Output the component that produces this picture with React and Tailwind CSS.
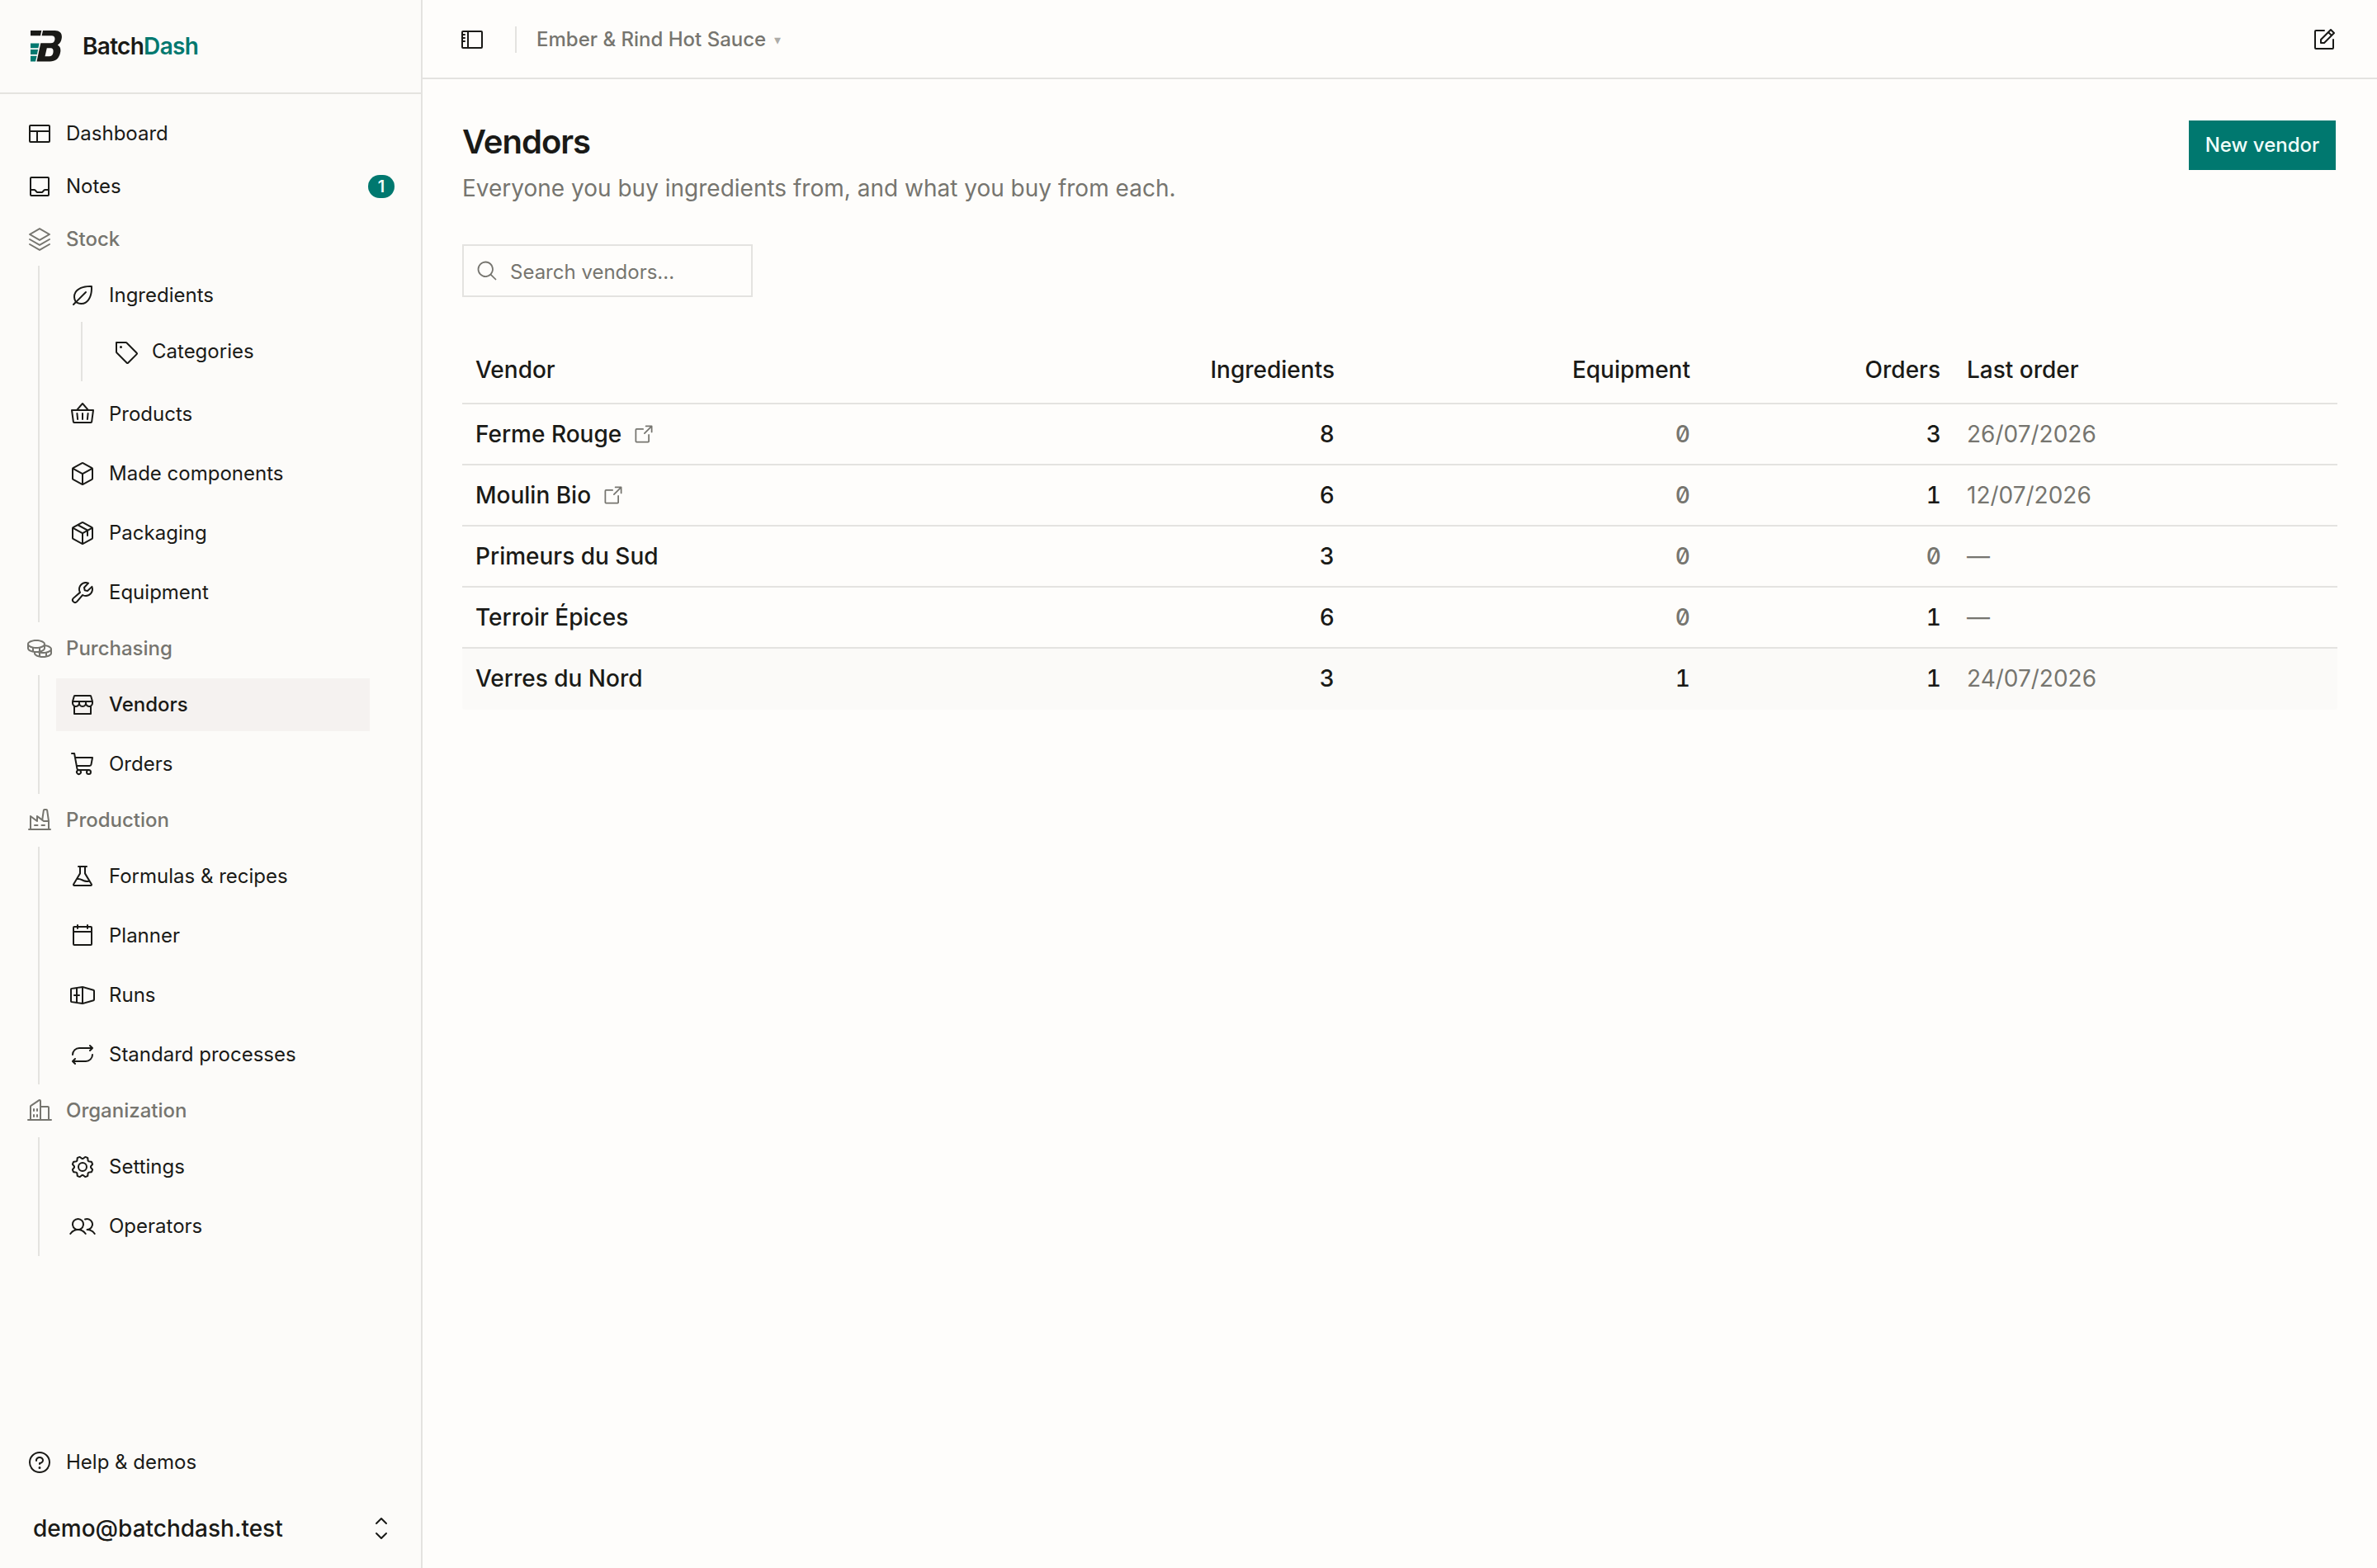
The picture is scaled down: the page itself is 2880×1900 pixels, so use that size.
import {
    PiLayout, PiTray, PiStack, PiLeaf, PiTag, PiBasket, PiCube, PiPackage, PiWrench, PiCoins,
    PiStorefront, PiShoppingCart, PiFactory, PiFlask, PiCalendarBlank, PiShippingContainer,
    PiRepeat, PiBuildings, PiGear, PiUsers, PiQuestion, PiCaretUpDown, PiSidebar,
    PiNotePencil, PiMagnifyingGlass, PiArrowSquareOut,
} from 'react-icons/pi';
import clsx from 'clsx';

const groups = [
    {
        label: 'Stock',
        icon: PiStack,
        items: [
            { label: 'Ingredients', icon: PiLeaf, children: [{ label: 'Categories', icon: PiTag }] },
            { label: 'Products', icon: PiBasket },
            { label: 'Made components', icon: PiCube },
            { label: 'Packaging', icon: PiPackage },
            { label: 'Equipment', icon: PiWrench },
        ],
    },
    {
        label: 'Purchasing',
        icon: PiCoins,
        items: [
            { label: 'Vendors', icon: PiStorefront, active: true },
            { label: 'Orders', icon: PiShoppingCart },
        ],
    },
    {
        label: 'Production',
        icon: PiFactory,
        items: [
            { label: 'Formulas & recipes', icon: PiFlask },
            { label: 'Planner', icon: PiCalendarBlank },
            { label: 'Runs', icon: PiShippingContainer },
            { label: 'Standard processes', icon: PiRepeat },
        ],
    },
    {
        label: 'Organization',
        icon: PiBuildings,
        items: [
            { label: 'Settings', icon: PiGear },
            { label: 'Operators', icon: PiUsers },
        ],
    },
];

const vendors = [
    { name: 'Ferme Rouge', link: true, ingredients: 8, equipment: 0, orders: 3, last: '26/07/2026' },
    { name: 'Moulin Bio', link: true, ingredients: 6, equipment: 0, orders: 1, last: '12/07/2026' },
    { name: 'Primeurs du Sud', ingredients: 3, equipment: 0, orders: 0, last: '—' },
    { name: 'Terroir Épices', ingredients: 6, equipment: 0, orders: 1, last: '—' },
    { name: 'Verres du Nord', ingredients: 3, equipment: 1, orders: 1, last: '24/07/2026', hover: true },
];

const columns = 'grid grid-cols-[771px_301px_431px_304px_465px] items-center';

function Logo() {
    return (
        <svg viewBox="0 0 38 38" className="size-[38px] shrink-0">
            <path fill="#1a1a17" d="M0 0H13.300L12 6.200H0Z" />
            <path
                fill="#1a1a17"
                fillRule="evenodd"
                d="M15 0H29.500C35.500 0 38.500 3.500 37.800 9C37.200 13.500 35.500 15.800 32.800 17.500C36 19.200 37 22.500 36 27C34.500 34 30 37.500 23.500 37.500H7.500L12.300 15.300H24.500C27.500 15.300 29 13.800 29.400 11C29.800 8 28.500 6.200 25.500 6.200H13.600Z M19.800 21.300L17.500 31.300H22.500C25.300 31.300 26.800 30 27.400 27C28 23 27 21.300 24.500 21.300Z"
            />
            <path fill="#00786f" d="M0 15.500H10.600L9.400 21.200H0Z M0 23H9.100L7.900 29H0Z M0 30.700H7.600L6 37.500H0Z" />
        </svg>
    );
}

function NavItem({ item, muted }) {
    const Icon = item.icon;
    return (
        <a
            className={clsx(
                'flex h-16 items-center gap-4 px-4 text-[24px]',
                muted && 'font-medium text-[#76756f]',
                item.active && 'bg-[#f5f2f0] font-medium'
            )}
        >
            <Icon className="size-8 shrink-0" />
            <span>{item.label}</span>
            {item.badge && (
                <span className="ml-auto flex h-7 w-8 items-center justify-center rounded-full bg-teal-700 text-[20px] font-semibold text-teal-50">
                    {item.badge}
                </span>
            )}
        </a>
    );
}

function SubMenu({ items }) {
    return (
        <ul className="mr-[26px] ml-[30px] flex flex-col gap-2 border-l-2 border-[#e4e3e0] px-5 py-1">
            {items.map((item) => (
                <li key={item.label}>
                    <NavItem item={item} />
                    {item.children && <SubMenu items={item.children} />}
                </li>
            ))}
        </ul>
    );
}

function Count({ value }) {
    return (
        <span
            className={clsx(
                'pr-[15px] text-right font-medium tabular-nums slashed-zero',
                value === 0 && 'text-[#76756f]'
            )}
        >
            {value}
        </span>
    );
}

export default function App() {
    return (
        <div className="flex h-[1900px] w-[2880px] overflow-hidden bg-[#fefdfb] font-['Inter',sans-serif] text-[#1a1a17]">
            {/* Sidebar */}
            <aside className="flex w-[512px] shrink-0 flex-col border-r-2 border-[#e4e3e0] bg-[#fcfbf9]">
                <div className="flex h-[114px] items-center gap-[25px] border-b-2 border-[#e4e3e0] px-[37px]">
                    <Logo />
                    <span className="text-[28px] font-semibold tracking-tight">
                        Batch<span className="text-teal-700">Dash</span>
                    </span>
                </div>
                <nav className="flex-1 p-4">
                    <NavItem item={{ label: 'Dashboard', icon: PiLayout }} />
                    <NavItem item={{ label: 'Notes', icon: PiTray, badge: 1 }} />
                    {groups.map((group) => (
                        <div key={group.label}>
                            <NavItem item={group} muted />
                            <SubMenu items={group.items} />
                        </div>
                    ))}
                </nav>
                <div className="px-4">
                    <NavItem item={{ label: 'Help & demos', icon: PiQuestion }} />
                </div>
                <div className="flex h-24 items-center justify-between pr-8 pl-10 text-[28px] font-medium">
                    demo@batchdash.test
                    <PiCaretUpDown className="size-8" />
                </div>
            </aside>

            <div className="flex flex-1 flex-col">
                {/* Top bar */}
                <header className="flex h-24 items-center border-b-2 border-[#e4e3e0] pt-0.5 pr-12 pl-11">
                    <PiSidebar className="size-8" />
                    <div className="mr-6 ml-9 h-8 w-0.5 bg-[#e4e3e0]" />
                    <span className="text-[24px] font-medium text-[#76756f]">Ember &amp; Rind Hot Sauce</span>
                    <span className="ml-2.5 text-[16px] text-[#76756f]/60">▾</span>
                    <PiNotePencil className="ml-auto size-8" />
                </header>

                <main className="flex flex-col p-12">
                    <div className="flex items-start justify-between">
                        <div>
                            <h1 className="text-[40px] leading-[56px] font-semibold tracking-tight">Vendors</h1>
                            <p className="text-[28px] leading-[56px] text-[#76756f]">
                                Everyone you buy ingredients from, and what you buy from each.
                            </p>
                        </div>
                        <button className="h-16 w-[182px] border-2 border-transparent bg-teal-700 bg-clip-padding text-[24px] font-medium text-teal-50">
                            New vendor
                        </button>
                    </div>

                    <div className="mt-10 flex h-16 w-[352px] items-center gap-[14px] border-2 border-[#e4e3e0] px-[14px] text-[24px] text-[#76756f]">
                        <PiMagnifyingGlass className="size-7" />
                        <span className="pt-[3px]">Search vendors...</span>
                    </div>

                    {/* Vendor table */}
                    <div className="mt-12 text-[28px]">
                        <div className={clsx(columns, 'h-[82px] border-b-2 border-[#e4e3e0] font-medium')}>
                            <span className="pl-4">Vendor</span>
                            <span className="pr-[15px] text-right">Ingredients</span>
                            <span className="pr-[15px] text-right">Equipment</span>
                            <span className="pr-4 text-right">Orders</span>
                            <span className="pl-4">Last order</span>
                        </div>
                        {vendors.map((vendor) => (
                            <div
                                key={vendor.name}
                                className={clsx(
                                    columns,
                                    vendor.hover
                                        ? 'h-[74px] rounded-b bg-[#fbfaf8] pb-0.5'
                                        : 'h-[74px] border-b-2 border-[#e4e3e0]'
                                )}
                            >
                                <span className="flex items-center gap-[13px] pl-4 font-medium">
                                    {vendor.name}
                                    {vendor.link && <PiArrowSquareOut className="size-7 text-[#76756f]" />}
                                </span>
                                <Count value={vendor.ingredients} />
                                <Count value={vendor.equipment} />
                                <Count value={vendor.orders} />
                                <span className="pl-4 text-[#76756f]">{vendor.last}</span>
                            </div>
                        ))}
                    </div>
                </main>
            </div>
        </div>
    );
}
